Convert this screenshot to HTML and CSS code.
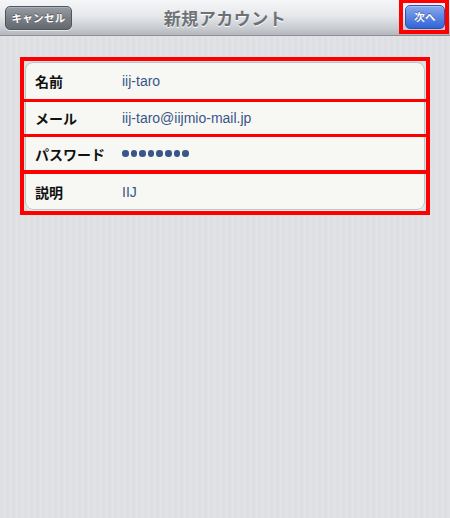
FILE: index.html
```html
<!DOCTYPE html>
<html lang="ja">
<head>
<meta charset="utf-8">
<title>新規アカウント</title>
<link rel="stylesheet" href="styles.css">
</head>
<body>
<header class="navbar">
  <div class="nav-left"><button class="btn btn-cancel">キャンセル</button></div>
  <h1 class="nav-title">新規アカウント</h1>
  <div class="nav-right"><div class="mark-box"><button class="btn btn-next">次へ</button></div></div>
</header>
<main class="content">
  <div class="mark-outer">
    <div class="card">
      <div class="row row-1"><span class="label">名前</span><span class="value">iij-taro</span></div>
      <div class="divider"></div>
      <div class="row row-2"><span class="label">メール</span><span class="value">iij-taro@iijmio-mail.jp</span></div>
      <div class="divider"></div>
      <div class="row row-3"><span class="label">パスワード</span><span class="value dots"><i></i><i></i><i></i><i></i><i></i><i></i><i></i><i></i></span></div>
      <div class="divider divider-thick"></div>
      <div class="row row-4"><span class="label">説明</span><span class="value">IIJ</span></div>
    </div>
  </div>
</main>
</body>
</html>
```

FILE: styles.css
```css
html, body {
  margin: 0;
  padding: 0;
}
body {
  width: 450px;
  height: 518px;
  overflow: hidden;
  font-family: "Liberation Sans", "Noto Sans CJK JP", sans-serif;
  background: repeating-linear-gradient(90deg, #dddfe3 0px, #dddfe3 3px, #e0e2e5 3px, #e0e2e5 6px);
}
.navbar {
  height: 35px;
  border-bottom: 1px solid #8d9197;
  background: linear-gradient(#f5f6f8 0%, #e6e8eb 45%, #c9ccd1 80%, #b3b7bd 100%);
  display: grid;
  grid-template-columns: 1fr auto 1fr;
  align-items: start;
}
.nav-left {
  padding: 6px 0 0 5px;
}
.nav-right {
  display: flex;
  justify-content: flex-end;
  padding-right: 1px;
}
.nav-title {
  margin: 0;
  padding-top: 8px;
  font-family: "Noto Sans CJK JP", sans-serif;
  font-size: 17px;
  line-height: 20px;
  font-weight: bold;
  color: #6e7277;
  text-shadow: 0 1px 0 #ffffff;
  letter-spacing: 0.5px;
}
.btn {
  display: block;
  margin: 0;
  padding: 0;
  height: 24px;
  border-radius: 5px;
  font-family: "Noto Sans CJK JP", sans-serif;
  font-size: 10.5px;
  font-weight: bold;
  color: #ffffff;
  text-shadow: 0 -1px 0 rgba(0, 0, 0, 0.4);
  line-height: 22px;
  letter-spacing: 0.3px;
}
.btn-cancel {
  width: 67px;
  border: 1px solid #50555c;
  background: linear-gradient(#989ca3 0%, #7b8087 50%, #646970 100%);
  box-shadow: inset 0 1px 0 rgba(255, 255, 255, 0.25), 0 1px 0 rgba(255, 255, 255, 0.6);
}
.mark-box {
  border: 4px solid #ff0000;
  border-top-width: 3px;
  padding: 2px 0 1px 2px;
  width: 40px;
}
.btn-next {
  width: 40px;
  border: 1px solid #2e54a8;
  background: linear-gradient(#86a9ef 0%, #5c86e3 50%, #3164d8 100%);
  box-shadow: inset 0 1px 0 rgba(255, 255, 255, 0.3);
}
.content {
  padding: 21px 20px 0 20px;
}
.mark-outer {
  border: 4px solid #ff0000;
  padding: 1px;
}
.card {
  background: #f7f8f3;
  border: 1px solid #bfc2c6;
  border-radius: 8px;
  box-shadow: 0 1px 0 rgba(255, 255, 255, 0.7);
}
.row {
  display: grid;
  grid-template-columns: 87px 1fr;
  align-items: center;
  padding-left: 9px;
}
.row-1 { height: 36px; }
.row-2 { height: 32px; }
.row-3 { height: 33px; }
.row-4 { height: 35px; }
.divider {
  height: 3px;
  background: #ff0000;
  margin: 0 -2px;
}
.divider-thick {
  height: 4px;
}
.label {
  font-family: "Noto Sans CJK JP", sans-serif;
  font-size: 14px;
  font-weight: bold;
  color: #111111;
}
.value {
  font-family: "Liberation Sans", "Noto Sans CJK JP", sans-serif;
  font-size: 14px;
  color: #3a5689;
}
.dots {
  display: flex;
  gap: 2px;
  align-items: center;
}
.dots i {
  display: block;
  width: 6.6px;
  height: 6.6px;
  border-radius: 50%;
  background: #3a5689;
}
```
